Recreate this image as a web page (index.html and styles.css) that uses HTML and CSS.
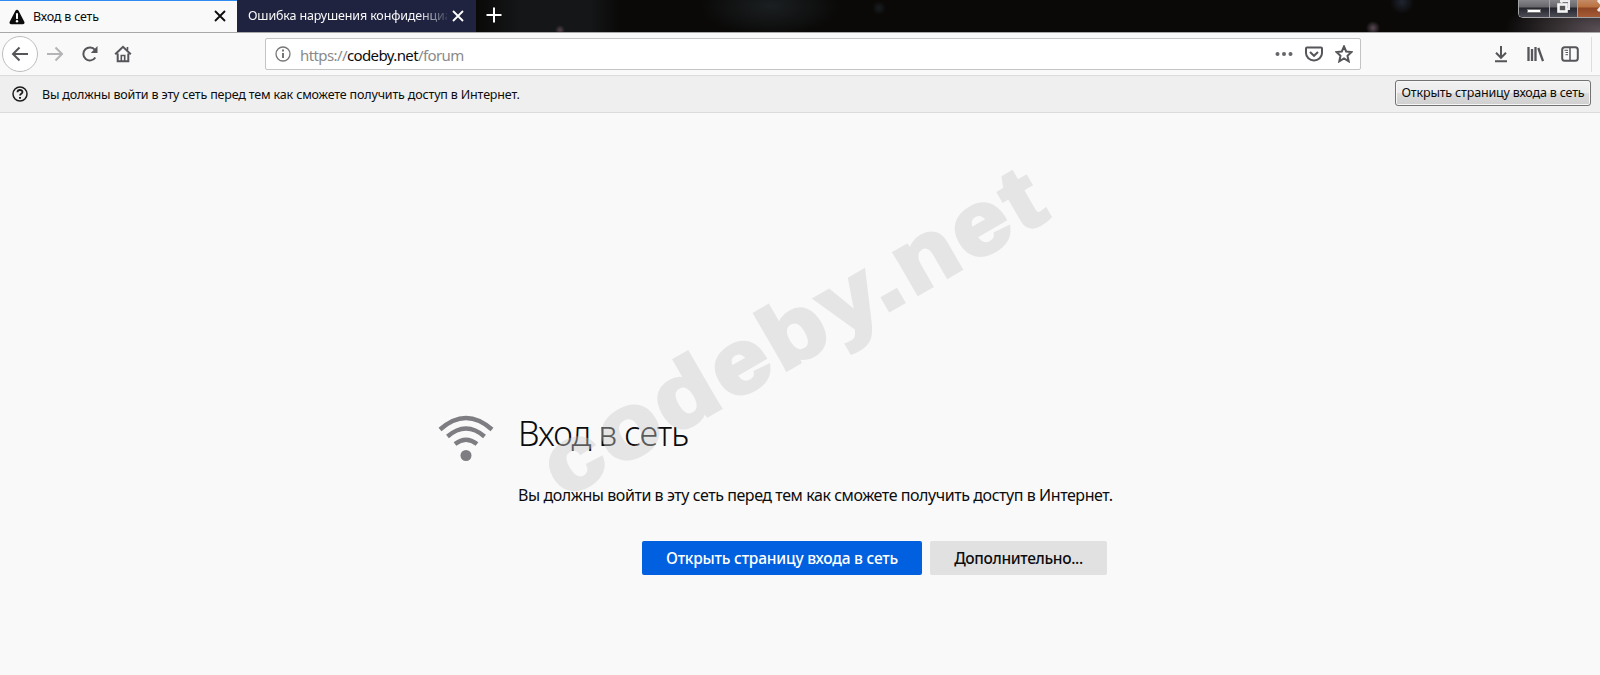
FILE: index.html
```html
<!DOCTYPE html>
<html lang="ru">
<head>
    <meta charset="UTF-8">
    <meta name="viewport" content="width=device-width, initial-scale=1.0">
    <title>Вход в сеть</title>
    <link rel="stylesheet" href="styles.css">
</head>
<body>
    <div class="browser">
        <div class="tabs">
            <div class="tab active">
                <svg class="warning" width="16" height="16" viewBox="0 0 16 16">
                    <path d="M8 .8a1.8 1.8 0 0 1 1.6 1l5.7 11a1.7 1.7 0 0 1-1.5 2.5H2.2a1.7 1.7 0 0 1-1.5-2.5l5.7-11A1.8 1.8 0 0 1 8 .8z" fill="#0c0c0d"/>
                    <path d="M8 5v4.2" stroke="#fff" stroke-width="2" stroke-linecap="round"/>
                    <circle cx="8" cy="12.3" r="1.2" fill="#fff"/>
                </svg>
                <span class="tab-title">Вход в сеть</span>
                <svg class="close" width="12" height="12" viewBox="0 0 12 12"><path d="M1 1l10 10M11 1L1 11"/></svg>
            </div>
            <div class="tab inactive">
                <span class="tab-title fade">Ошибка нарушения конфиденциа</span>
                <svg class="close" width="12" height="12" viewBox="0 0 12 12"><path d="M1 1l10 10M11 1L1 11"/></svg>
            </div>
            <svg class="new-tab" width="16" height="16" viewBox="0 0 16 16"><path d="M8 .5v15M.5 8h15"/></svg>
            <div class="window-buttons">
                <div class="win minimize"><span></span></div>
                <div class="win restore">
                    <svg width="16" height="14" viewBox="0 0 16 14">
                        <path d="M5.5 0v3M4 1h9v8h-2" fill="none" stroke="#eee" stroke-width="2"/>
                        <rect x="2.5" y="4.5" width="8" height="7" fill="#555" stroke="#f4f4f4" stroke-width="2.6"/>
                    </svg>
                </div>
                <div class="win exit">
                    <svg width="16" height="14" viewBox="0 0 16 14"><path d="M2 0l10 11M12 0L2 11" stroke="#eee" stroke-width="3"/></svg>
                </div>
            </div>
        </div>

        <div class="toolbar">
            <div class="nav">
                <div class="back">
                    <svg width="18" height="16" viewBox="0 0 18 16"><path d="M17 8H2M8.5 1.5L2 8l6.5 6.5"/></svg>
                </div>
                <svg class="forward" width="18" height="16" viewBox="0 0 18 16"><path d="M1 8h15M9.5 1.5L16 8l-6.5 6.5"/></svg>
                <svg class="reload" width="18" height="18" viewBox="0 0 18 18">
                    <path d="M14.3 12.5A6.5 6.5 0 1 1 14 5"/>
                    <path d="M16.5 1v7H9.8z" class="solid"/>
                </svg>
                <svg class="home" width="18" height="18" viewBox="0 0 18 18">
                    <path d="M1.2 9.3L9 1.8l7.8 7.5M3.7 8.5v7.7h10.6V8.5"/>
                    <path d="M7.3 16v-5.5h3.4V16M13.5 2v3" stroke-width="1.6"/>
                </svg>
            </div>
            <div class="url-bar">
                <svg class="info" width="16" height="16" viewBox="0 0 16 16">
                    <circle cx="8" cy="8" r="7"/>
                    <path d="M8 7v5" stroke-width="2"/>
                    <path d="M8 3.6v2" stroke-width="2"/>
                </svg>
                <span class="url">https://<b>codeby.net</b>/forum</span>
                <svg class="dots" width="18" height="6" viewBox="0 0 18 6">
                    <circle cx="2.5" cy="3" r="2"/><circle cx="9" cy="3" r="2"/><circle cx="15.5" cy="3" r="2"/>
                </svg>
                <svg class="pocket" width="18" height="16" viewBox="0 0 18 16">
                    <path d="M2 1.5h14q1 0 1 1V7A8 7.5 0 0 1 1 7V2.5q0-1 1-1z"/>
                    <path d="M5 6l4 3.8L13 6"/>
                </svg>
                <svg class="star" width="18" height="18" viewBox="0 0 18 18">
                    <path d="M9 1.5l2.2 5 5.3.6-4 3.7 1.2 5.5L9 13.5l-4.7 2.8 1.2-5.5-4-3.7 5.3-.6z"/>
                </svg>
            </div>
            <div class="tools">
                <svg width="14" height="18" viewBox="0 0 14 18"><path d="M7 1v11.5M2 7.8l5 5 5-5M1 16.3h12"/></svg>
                <svg width="17" height="16" viewBox="0 0 17 16"><path d="M1.5 1v14M5 3v12M8.5 1v14M11.3 2l4.7 13" stroke-width="2.3"/></svg>
                <svg width="18" height="16" viewBox="0 0 18 16">
                    <rect x="1.2" y="1.2" width="15.6" height="13.6" rx="2.5"/>
                    <path d="M9 1.5v13" stroke-width="1.5"/>
                    <path d="M3.5 4.3H7M4.5 6.5H7M4.5 8.7H7" stroke-width="1"/>
                </svg>
                <span class="separator"></span>
            </div>
        </div>

        <div class="notification">
            <svg width="16" height="16" viewBox="0 0 16 16">
                <circle cx="8" cy="8" r="7"/>
                <path d="M5.5 6.3C5.5 3.2 10.5 3.3 10.5 6.1 10.5 7.7 8 7.9 8 9.6" stroke-width="1.8"/>
                <path d="M8 11v1.8" stroke-width="2"/>
            </svg>
            <span class="message">Вы должны войти в эту сеть перед тем как сможете получить доступ в Интернет.</span>
            <button class="notification-button">Открыть страницу входа в сеть</button>
        </div>

        <div class="content">
            <div class="portal">
                <svg class="wifi" width="56" height="48" viewBox="0 0 56 48">
                    <path d="M2 14.5Q28-8.5 54 14.5M9.5 21.5Q28 5.5 46.5 21.5M17 29Q28 20.5 39 29"/>
                    <circle cx="28" cy="40.5" r="5.5"/>
                </svg>
                <div class="text">
                    <h1>Вход в сеть</h1>
                    <p>Вы должны войти в эту сеть перед тем как сможете получить доступ в Интернет.</p>
                    <div class="buttons">
                        <button class="primary">Открыть страницу входа в сеть</button>
                        <button class="secondary">Дополнительно...</button>
                    </div>
                </div>
            </div>
            <div class="watermark">codeby.net</div>
        </div>
    </div>
</body>
</html>
```

FILE: styles.css
```css
* {
    box-sizing: border-box;
}

body {
    margin: 0;
    font-family: "Noto Sans", "Open Sans", sans-serif;
    background-color: #f9f9fa;
    color: #0c0c0d;
}

.browser {
    width: 1600px;
    height: 675px;
    display: flex;
    flex-direction: column;
    overflow: hidden;
}

svg {
    display: block;
    flex-shrink: 0;
}

button {
    font-family: inherit;
    padding: 0;
    white-space: nowrap;
}

/* tabs */
.tabs {
    display: flex;
    height: 33px;
    border-bottom: 1px solid #a8a8a8;
    background:
        radial-gradient(circle at 1373px 28px, #5b4b55 0, transparent 7px),
        radial-gradient(circle at 560px 30px, #54414a 0, transparent 5px),
        radial-gradient(circle at 879px 8px, #1a1d1f 0, transparent 7px),
        radial-gradient(circle at 1402px 2px, #202430 0, transparent 12px),
        radial-gradient(ellipse 95px 40px at 1600px 30px, #5a5056 0, transparent),
        radial-gradient(ellipse 70px 30px at 770px 6px, #1b1f21 0, transparent),
        linear-gradient(90deg, #0a0908 475px, #141617 520px, #141617 590px, #0a0908 620px);
    background-repeat: no-repeat;
}

.tab {
    display: flex;
    align-items: center;
    height: 32px;
    font-size: 12.5px;
}

.active {
    width: 237px;
    padding: 0 11px 0 9px;
    border-top: 1px solid #2f8cf0;
    background-color: #f9f9fa;
}

.active .tab-title {
    margin: -1px 0 0 8px;
    letter-spacing: -0.2px;
}

.active .close {
    margin-top: -1px;
}

.inactive {
    width: 239px;
    padding: 0 12px 0 11px;
    background-color: #202340;
    color: #f9f9fa;
}

.fade {
    width: 199px;
    margin-top: -1px;
    white-space: nowrap;
    letter-spacing: -0.15px;
    -webkit-mask-image: linear-gradient(90deg, #000 170px, transparent 203px);
    mask-image: linear-gradient(90deg, #000 170px, transparent 203px);
}

.close {
    margin-left: auto;
    stroke: #0c0c0d;
    stroke-width: 1.8;
}

.inactive .close {
    stroke: #fff;
}

.new-tab {
    margin: 7px 0 0 10px;
    stroke: #fff;
    stroke-width: 2;
}

.window-buttons {
    display: flex;
    width: 82px;
    height: 18px;
    margin-left: auto;
    overflow: hidden;
    border: 1px solid #a3a3a6;
    border-width: 0 0 1px 1px;
    border-radius: 0 0 0 5px;
}

.win {
    display: flex;
    justify-content: center;
    width: 31px;
    flex-shrink: 0;
    border-right: 1px solid #a3a3a6;
    background: linear-gradient(#85858a 0, #66666b 7px, #24252d 8px, #4b4c55 17px);
}

.minimize span {
    width: 14px;
    height: 4px;
    margin-top: 9px;
    background-color: #fff;
    border: 1px solid #777;
}

.restore {
    width: 28px;
}

.exit {
    width: 46px;
    background: linear-gradient(#c48b66 0, #b9713f 7px, #8d4525 8px, #a55b35 17px);
    justify-content: flex-start;
    padding-left: 18px;
}

/* toolbar */
.toolbar {
    display: flex;
    align-items: center;
    height: 43px;
    border-bottom: 1px solid #dcdcdc;
    background-color: #f9f9fa;
}

.toolbar svg {
    fill: none;
    stroke: #55555a;
    stroke-width: 2;
}

.toolbar .solid {
    fill: #55555a;
    stroke: none;
}

.nav {
    display: flex;
    align-items: center;
    width: 265px;
    padding-left: 2px;
}

.back {
    display: flex;
    align-items: center;
    justify-content: center;
    width: 36px;
    height: 36px;
    border: 1px solid #bdbdbd;
    border-radius: 50%;
    background-color: #fff;
}

.toolbar .forward {
    margin-left: 8px;
    stroke: #b4b4b7;
}

.reload {
    margin-left: 17px;
}

.home {
    margin-left: 15px;
}

.url-bar {
    display: flex;
    align-items: center;
    width: 1096px;
    height: 32px;
    padding: 0 7px 0 9px;
    border: 1px solid #c4c4c4;
    border-radius: 2px;
    background-color: #fff;
}

.url-bar .info {
    stroke: #77777a;
    stroke-width: 1.3;
}

.url {
    margin-left: 9px;
    padding-top: 1px;
    font-size: 15px;
    letter-spacing: -0.6px;
    color: #8a8a8a;
}

.url b {
    font-weight: normal;
    color: #0c0c0d;
}

.toolbar .dots {
    margin-left: auto;
    fill: #66666a;
    stroke: none;
}

.pocket {
    margin-left: 12px;
}

.star {
    margin-left: 12px;
}

.tools {
    display: flex;
    align-items: center;
    margin-left: 133px;
    gap: 17px;
}

.tools svg:nth-child(1) {
    margin-right: 2px;
}

.separator {
    width: 1px;
    height: 35px;
    margin-left: -5px;
    background-color: #dedede;
}

/* notification */
.notification {
    display: flex;
    align-items: center;
    height: 37px;
    padding: 0 9px 0 12px;
    border-bottom: 1px solid #dcdcdc;
    background-color: #efefef;
}

.notification svg {
    fill: none;
    stroke: #1c1c1d;
    stroke-width: 1.5;
}

.message {
    margin-left: 14px;
    font-size: 12.5px;
    letter-spacing: -0.165px;
    white-space: nowrap;
}

.notification-button {
    width: 196px;
    height: 26px;
    margin: 0 0 3px auto;
    border: 1px solid #727272;
    border-radius: 3px;
    background: linear-gradient(#f2f2f2, #ebebeb 50%, #dcdcdc 50%, #cfcfcf);
    box-shadow: inset 0 0 0 1px #f7f7f7;
    color: #0c0c0d;
    font-size: 12.5px;
    letter-spacing: -0.17px;
}

/* page */
.content {
    position: relative;
    flex: 1;
    padding: 299px 0 0 438px;
}

.portal {
    display: flex;
    gap: 24px;
}

.wifi {
    margin-top: 3px;
    fill: none;
    stroke: #7d7d82;
    stroke-width: 4.4;
}

.wifi circle {
    fill: #7d7d82;
    stroke: none;
}

.text {
    width: 594px;
}

h1 {
    margin: 0;
    font-size: 34px;
    font-weight: 300;
    line-height: 42px;
    letter-spacing: -0.85px;
    white-space: nowrap;
}

p {
    margin: 29px 0 0;
    font-size: 16px;
    line-height: 24px;
    letter-spacing: -0.435px;
    white-space: nowrap;
}

.buttons {
    display: flex;
    justify-content: flex-end;
    gap: 8px;
    padding-right: 5px;
    margin-top: 34px;
}

.primary,
.secondary {
    height: 34px;
    border: none;
    border-radius: 2px;
    font-size: 15.5px;
    font-weight: 500;
}

.primary {
    width: 280px;
    background-color: #0060df;
    color: #fff;
    letter-spacing: -0.2px;
}

.secondary {
    width: 177px;
    background-color: #e1e1e2;
    color: #0c0c0d;
    letter-spacing: -0.35px;
}

.watermark {
    position: absolute;
    left: 564px;
    top: 305px;
    font-family: "Liberation Sans", Arial, sans-serif;
    font-size: 88px;
    font-weight: bold;
    line-height: 100px;
    letter-spacing: 4.4px;
    color: #cbcbcb;
    -webkit-text-stroke: 4.5px #cbcbcb;
    opacity: 0.41;
    transform: rotate(-30deg) scaleX(1.13);
    transform-origin: 0 81px;
    pointer-events: none;
}
```
